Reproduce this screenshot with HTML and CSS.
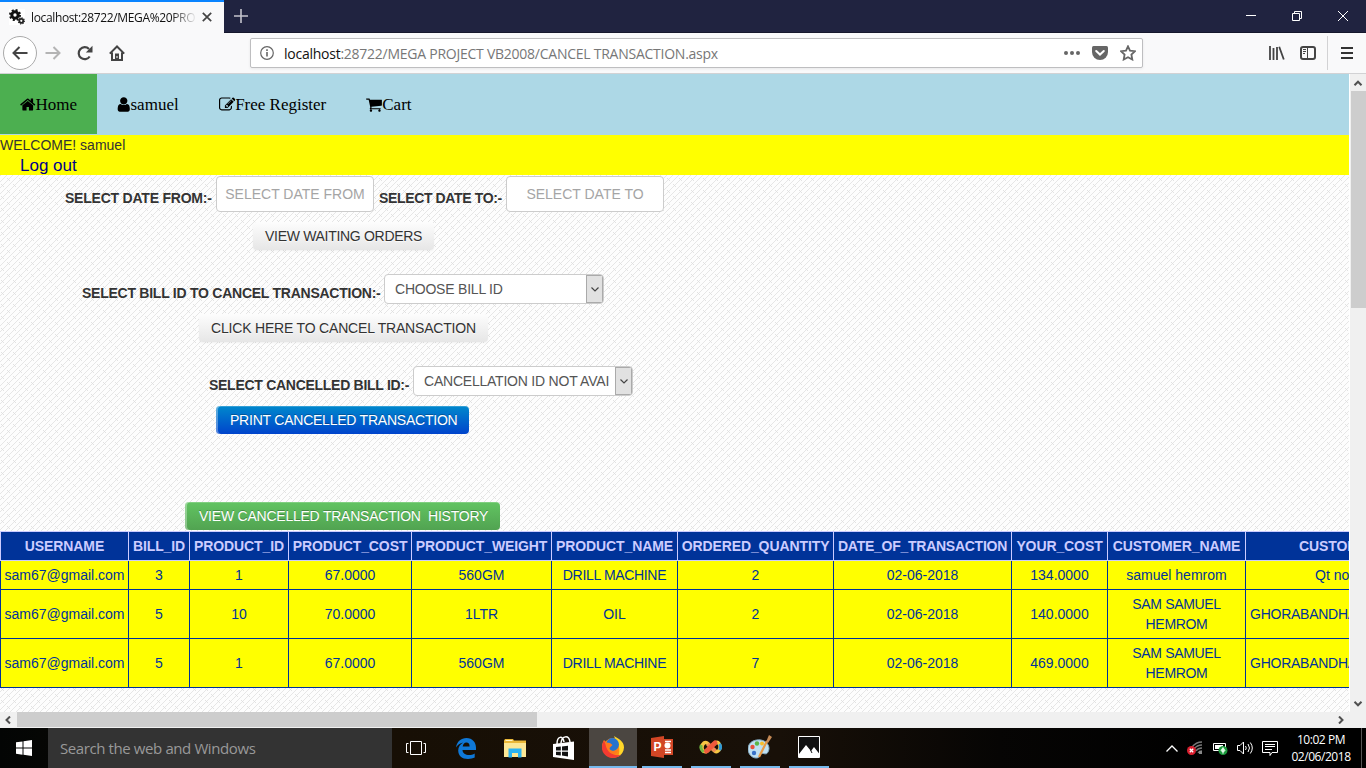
FILE: index.html
```html
<!DOCTYPE html>
<html lang="en">
<head>
<meta charset="utf-8">
<title>Cancel Transaction</title>
<link rel="stylesheet" href="styles.css">
</head>
<body>
<header class="tabbar">
  <div class="tab">
    <svg class="favicon" width="16" height="16" viewBox="0 0 16 16"><rect width="16" height="16" fill="#fff"/><circle cx="6" cy="6" r="3.2" fill="none" stroke="#111" stroke-width="3"/><circle cx="6" cy="6" r="5" fill="none" stroke="#111" stroke-width="2" stroke-dasharray="2 1.93"/><circle cx="12.3" cy="11.8" r="2" fill="none" stroke="#222" stroke-width="1.8"/><circle cx="12.3" cy="11.8" r="3.1" fill="none" stroke="#222" stroke-width="1.1" stroke-dasharray="1.2 1.2"/></svg>
    <span class="tab-title">localhost:28722/MEGA%20PRO</span>
    <svg width="10" height="10" viewBox="0 0 10 10"><path d="M.8.8l8.4 8.4M9.2.8L.8 9.2" stroke="#444" stroke-width="1.7"/></svg>
  </div>
  <svg class="plus" width="14" height="14" viewBox="0 0 14 14"><path d="M7 0v14M0 7h14" stroke="#c4c4cc" stroke-width="1.6"/></svg>
  <div class="window-controls">
    <svg width="10" height="10" viewBox="0 0 10 10"><path d="M0 4.5h10" stroke="#fff"/></svg>
    <svg width="10" height="10" viewBox="0 0 10 10"><path d="M.5 2.5h7v7h-7zM2.5 2.500V.5h7v7H7.500" fill="none" stroke="#fff"/></svg>
    <svg width="10" height="10" viewBox="0 0 10 10"><path d="M0 0l10 10M10 0L0 10" stroke="#fff"/></svg>
  </div>
</header>
<div class="toolbar">
  <div class="back"><svg width="16" height="14" viewBox="0 0 16 14"><path d="M15.500 7H2M7.500 1L1.500 7l6 6" fill="none" stroke="#444" stroke-width="2"/></svg></div>
  <svg class="forward" width="16" height="14" viewBox="0 0 16 14"><path d="M.5 7H14M8.500 1l6 6-6 6" fill="none" stroke="#b4b4b4" stroke-width="2"/></svg>
  <svg class="reload" width="16" height="16" viewBox="0 0 16 16"><path d="M12.700 11.500A6 6 0 1 1 12 4" fill="none" stroke="#444" stroke-width="2.200"/><path d="M15.500.8v6.700H8.800z" fill="#444"/></svg>
  <svg class="home" width="16" height="16" viewBox="0 0 16 16"><path d="M.8 8.600L8 1.500l7.200 7.100M3 7.500v7.500h10V7.500" fill="none" stroke="#444" stroke-width="2"/><path d="M6 8.500h4V15H6z" fill="#444"/><path d="M8 11v2" stroke="#fff"/></svg>
  <div class="address">
    <svg class="info" width="14" height="14" viewBox="0 0 14 14"><circle cx="7" cy="7" r="6.300" fill="none" stroke="#666" stroke-width="1.200"/><path d="M7 6v4.500M7 3.200V5" stroke="#666" stroke-width="1.600"/></svg>
    <span class="url"><b>localhost</b>:28722/MEGA PROJECT VB2008/CANCEL TRANSACTION.aspx</span>
    <svg class="dots" width="16" height="4" viewBox="0 0 16 4"><g fill="#666"><circle cx="2" cy="2" r="2"/><circle cx="8" cy="2" r="2"/><circle cx="14" cy="2" r="2"/></g></svg>
    <svg class="pocket" width="16" height="14" viewBox="0 0 16 14"><path d="M1.500 0h13Q16 0 16 1.500V6A8 8 0 0 1 0 6V1.500Q0 0 1.500 0z" fill="#666"/><path d="M4.200 5L8 8.600 11.800 5" fill="none" stroke="#fff" stroke-width="2" stroke-linecap="round"/></svg>
    <svg class="star" width="16" height="16" viewBox="0 0 16 16"><path d="M8 1.300l2 4.300 5 .6-3.600 3.300.9 5L8 12.200l-4.300 2.300.9-5L1 6.200l5-.6z" fill="none" stroke="#666" stroke-width="1.800"/></svg>
  </div>
  <svg class="library" width="16" height="14" viewBox="0 0 16 14"><path d="M1 0v14M4.500 2v12M8 1v13M10.200.8l4.600 12.700" fill="none" stroke="#444" stroke-width="1.800"/></svg>
  <svg class="sidebar" width="16" height="14" viewBox="0 0 16 14"><rect x="1" y="1" width="14" height="12" rx="2" fill="none" stroke="#444" stroke-width="2"/><path d="M7.500 1v12M3 3.500h3M3 5.500h3M3 7.500h2" stroke="#444"/></svg>
  <div class="menu"><svg width="12" height="12" viewBox="0 0 12 12"><path d="M0 1h12M0 6h12M0 11h12" stroke="#333" stroke-width="2"/></svg></div>
</div>
<div class="viewport">
<main class="page">
  <nav class="nav">
    <a class="active"><svg class="fa" viewBox="0 0 1664 1792"><path transform="translate(-64)" d="M1472 992v480q0 26-19 45t-45 19h-384v-384h-256v384h-384q-26 0-45-19t-19-45v-480q0-1 .5-3t.5-3l575-474 575 474q1 2 1 6zm223-69l-62 74q-8 9-21 11h-3q-13 0-21-7l-692-577-692 577q-12 8-24 7-13-2-21-11l-62-74q-8-10-7-23.500t11-21.500l719-599q32-26 76-26t76 26l244 204v-195q0-14 9-23t23-9h192q14 0 23 9t9 23v408l219 182q10 8 11 21.500t-7 23.500z"/></svg>Home</a>
    <a><svg class="fa fa-user" viewBox="0 0 1280 1792"><path transform="translate(-256)" d="M1536 1399q0 109-62.500 187t-150.500 78h-854q-88 0-150.500-78t-62.500-187q0-85 8.500-160.500t31.500-152 58.500-131 94-89 134.500-34.500q131 128 313 128t313-128q76 0 134.500 34.500t94 89 58.500 131 31.500 152 8.500 160.500zm-256-887q0 159-112.500 271.500t-271.500 112.500-271.500-112.500-112.500-271.500 112.500-271.500 271.500-112.500 271.500 112.500 112.500 271.500z"/></svg>samuel</a>
    <a><svg class="fa fa-edit" viewBox="0 0 1792 1792"><path d="M888 1184l116-116-152-152-116 116v56h96v96h56zm440-720q-16-16-33 1l-350 350q-17 17-1 33t33-1l350-350q17-17 1-33zm80 594v190q0 119-84.500 203.500t-203.500 84.500h-832q-119 0-203.500-84.500t-84.500-203.500v-832q0-119 84.500-203.500t203.500-84.500h832q63 0 117 25 15 7 18 23 3 17-9 29l-49 49q-14 14-32 8-23-6-45-6h-832q-66 0-113 47t-47 113v832q0 66 47 113t113 47h832q66 0 113-47t47-113v-126q0-13 9-22l64-64q15-15 35-7t20 29zm-96-738l288 288-672 672h-288v-288zm444 132l-92 92-288-288 92-92q28-28 68-28t68 28l152 152q28 28 28 68t-28 68z"/></svg>Free Register</a>
    <a><svg class="fa" viewBox="0 0 1664 1792"><path transform="translate(-64)" d="M704 1536q0 52-38 90t-90 38-90-38-38-90 38-90 90-38 90 38 38 90zm896 0q0 52-38 90t-90 38-90-38-38-90 38-90 90-38 90 38 38 90zm128-1088v512q0 24-16.500 42.500t-40.500 21.500l-1044 122q13 60 13 70 0 16-24 64h920q26 0 45 19t19 45-19 45-45 19h-1024q-26 0-45-19t-19-45q0-11 8-31.500t16-36 21.500-40 15.500-29.500l-177-823h-204q-26 0-45-19t-19-45 19-45 45-19h256q16 0 28.500 6.500t19.500 15.500 13 24.500 8 26 5.500 29.500 4.500 26h1201q26 0 45 19t19 45z"/></svg>Cart</a>
  </nav>
  <div class="welcome"><div>WELCOME! samuel</div><a class="logout">Log out</a></div>
  <div class="row dates"><label class="l1">SELECT DATE FROM:-</label><input class="field" placeholder="SELECT DATE FROM"><label class="l2">SELECT DATE TO:-</label><input class="field" placeholder="SELECT DATE TO"></div>
  <div class="row r-wait"><button class="btn">VIEW WAITING ORDERS</button></div>
  <div class="row r-bill"><label>SELECT BILL ID TO CANCEL TRANSACTION:-</label><div class="select"><span>CHOOSE BILL ID</span><i><svg width="8" height="5" viewBox="0 0 8 5"><path d="M.5.5L4 4 7.500.5" fill="none" stroke="#444" stroke-width="1.200"/></svg></i></div></div>
  <div class="row r-cancel"><button class="btn">CLICK HERE TO CANCEL TRANSACTION</button></div>
  <div class="row r-cancelled"><label>SELECT CANCELLED BILL ID:-</label><div class="select"><span>CANCELLATION ID NOT AVAI</span><i><svg width="8" height="5" viewBox="0 0 8 5"><path d="M.5.5L4 4 7.500.5" fill="none" stroke="#444" stroke-width="1.200"/></svg></i></div></div>
  <div class="row r-print"><button class="btn primary">PRINT CANCELLED TRANSACTION</button></div>
  <div class="row r-history"><button class="btn success">VIEW CANCELLED TRANSACTION&nbsp; HISTORY</button></div>
  <table class="orders">
    <colgroup><col class="c128"><col class="c61"><col class="c99"><col class="c123"><col class="c140"><col class="c126"><col class="c156"><col class="c178"><col class="c96"><col class="c138"><col class="c270"></colgroup>
    <thead><tr><th>USERNAME</th><th>BILL_ID</th><th>PRODUCT_ID</th><th>PRODUCT_COST</th><th>PRODUCT_WEIGHT</th><th>PRODUCT_NAME</th><th>ORDERED_QUANTITY</th><th class="tight">DATE_OF_TRANSACTION</th><th>YOUR_COST</th><th>CUSTOMER_NAME</th><th class="address-head">CUSTOMER_ADDRESS</th></tr></thead>
    <tbody>
    <tr class="short"><td>sam67@gmail.com</td><td>3</td><td>1</td><td>67.0000</td><td>560GM</td><td class="caps">DRILL MACHINE</td><td>2</td><td>02-06-2018</td><td>134.0000</td><td>samuel hemrom</td><td class="qt">Qt no</td></tr>
    <tr><td>sam67@gmail.com</td><td>5</td><td>10</td><td>70.0000</td><td>1LTR</td><td>OIL</td><td>2</td><td>02-06-2018</td><td>140.0000</td><td class="caps">SAM SAMUEL HEMROM</td><td class="left">GHORABANDHA</td></tr>
    <tr><td>sam67@gmail.com</td><td>5</td><td>1</td><td>67.0000</td><td>560GM</td><td class="caps">DRILL MACHINE</td><td>7</td><td>02-06-2018</td><td>469.0000</td><td class="caps">SAM SAMUEL HEMROM</td><td class="left">GHORABANDHA</td></tr>
    </tbody>
  </table>
</main>
<div class="vscroll"><svg width="10" height="6" viewBox="0 0 10 6"><path d="M1.500 5.200L5 1.700l3.500 3.500" fill="none" stroke="#505050" stroke-width="2"/></svg><div class="vthumb"></div><svg class="down" width="10" height="6" viewBox="0 0 10 6"><path d="M1.500.8L5 4.300 8.500.8" fill="none" stroke="#505050" stroke-width="2"/></svg></div>
</div>
<div class="hscroll"><svg width="6" height="8" viewBox="0 0 6 8"><path d="M5 .5L1.500 4 5 7.500" fill="none" stroke="#505050" stroke-width="2"/></svg><div class="hthumb"></div><svg class="right" width="6" height="8" viewBox="0 0 6 8"><path d="M1 .5L4.500 4 1 7.500" fill="none" stroke="#505050" stroke-width="2"/></svg></div>
<footer class="taskbar">
  <div class="start"><svg width="16" height="16" viewBox="0 0 16 16"><path d="M0 2.300L6.500 1.400V7.500H0zM7.500 1.200L16 0v7.500H7.500zM0 8.500h6.500v6.200L0 13.800zM7.500 8.500H16V16l-8.500-1.200z" fill="#fff"/></svg></div>
  <div class="search">Search the web and Windows</div>
  <div class="app view"><svg width="20" height="14" viewBox="0 0 20 14"><path d="M4.500.5h11v13h-11zM2.500 2.500h-2v9h2M17.500 2.500h2v9h-2" fill="none" stroke="#fff"/></svg></div>
  <div class="app"><svg width="20" height="21" viewBox="0 0 20 21"><path d="M0 9.500C1 3.500 5 0 10.500 0 16.500 0 20 4.500 20 9.800V12H6.500c.2 3.200 3 5 6.500 5 2 0 4-.6 5.700-1.600v4.200C17 20.500 14.700 21 12 21 6 21 2.200 17.500 2.200 12.500c0-3.500 2-6.500 5-8C4 5 1.500 7 0 9.500zM6.700 8.500h6.900c0-2.500-1-4-3.200-4S7 6.200 6.700 8.500z" fill="#0f78d7"/></svg></div>
  <div class="app"><svg width="22" height="19" viewBox="0 0 22 19"><path d="M0 1.500L1 0h8l1 1.500h12V18H0z" fill="#eab839"/><path d="M0 4h22v14H0z" fill="#fce795"/><path d="M1.500 1.500h7" stroke="#fff5c8"/><path d="M4.500 18.500V9.500h13v9h-3.500V14H8v4.500z" fill="#2bb3f3"/></svg></div>
  <div class="app"><svg width="22" height="24" viewBox="0 0 22 24"><path d="M0 8l21-2.500V24L0 21z" fill="#fff"/><path d="M4 8C4 0 10-1 11 6M8 7C9-1 16-1 17 6" fill="none" stroke="#fff" stroke-width="1.500"/><path d="M3 11l4.800-.5v4H3zM9 10.400l6-.6v4.700H9zM3 15.700h4.800v3.800L3 19zM9 15.700h6v4.700l-6-.8z" fill="#111"/></svg></div>
  <div class="app focus"><svg width="22" height="22" viewBox="0 0 22 22"><circle cx="11" cy="12" r="10" fill="#ff8a14"/><path d="M12 0c4 2.500 10 5 10 11.500-.2 4-2.500 7.500-6 9.300C18 17 18 9 14 5z" fill="#ffd729"/><circle cx="10.500" cy="8.500" r="6.500" fill="#2673cf"/><path d="M2 4l2.500 2.500L8 7l2.500 2L7.500 12c0 3 5.500 4 8.500 1.500-1 5-6 6.500-10 5C2 17 0 14 0 11c0-3 .8-5 2-7z" fill="#ff7a1c"/><path d="M0 12c0 5.500 5 10 11 10 3.500 0 6-1.500 8-3.500-5 2-14-.5-15.500-10L2 4.500C.8 6.500 0 9 0 12z" fill="#f33b31"/></svg></div>
  <div class="app open"><svg width="22" height="22" viewBox="0 0 22 22"><path d="M12 3h10v16H12z" fill="#d44827"/><path d="M14 5.500h6M14 14h6M14 16.500h6" stroke="#fff" stroke-width="1.500"/><circle cx="16.500" cy="9.500" r="3" fill="#fff"/><path d="M0 2l13-2v22L0 20z" fill="#d24625"/><text class="ppt" x="2.500" y="15">P</text></svg></div>
  <div class="app open"><svg width="24" height="16" viewBox="0 0 24 16"><path d="M12 8C9 4 7 2.500 5 4S2 10 4.500 12 9 12 12 8s6-6 8-3.500 1 7-1.500 8S14 11 12 8" fill="none" stroke="#f6c643" stroke-width="3.500"/><path d="M4.500 13C2 11 1.500 8 2.500 6" fill="none" stroke="#74b943" stroke-width="3"/><path d="M20.500 5c1.500 2 1 4.500 0 6" fill="none" stroke="#2f9ad7" stroke-width="3"/><path d="M8.500 5l8 7" stroke="#ef8a54" stroke-width="4"/><path d="M7.500 12L16 4" stroke="#ee5a3c" stroke-width="5" stroke-linecap="round"/></svg></div>
  <div class="app open"><svg width="24" height="24" viewBox="0 0 24 24"><path d="M0 14C0 7 7 4 13 5s10 7 7 12c-2 4-5 0-7 2s-1 4-5 4-8-4-8-9z" fill="#bfe0f2" stroke="#82a9bf"/><circle cx="4.500" cy="12" r="2.200" fill="#e7503c"/><circle cx="9" cy="8.500" r="2.200" fill="#59b647"/><circle cx="14" cy="8.500" r="2" fill="#f7bd2b"/><circle cx="6" cy="18" r="2.200" fill="#3872c9"/><path d="M11 22l8-16" stroke="#e79a45" stroke-width="2.200"/><path d="M18 7l3-7 3 2-4 6z" fill="#c58a55"/></svg></div>
  <div class="app open"><svg width="22" height="22" viewBox="0 0 22 22"><path d="M.5.5h21v21H.500z" fill="#111" stroke="#fff"/><path d="M1 18l7-9 5 6 3-4 5.500 7v3H1z" fill="#fff"/><path d="M12.500 14l1.500 3" stroke="#111"/></svg></div>
  <div class="tray">
    <svg width="12" height="7" viewBox="0 0 12 7"><path d="M.5 6.500L6 1l5.500 5.500" fill="none" stroke="#fff" stroke-width="1.300"/></svg>
    <svg width="16" height="14" viewBox="0 0 16 14"><path d="M5 6Q9 1 15 1M7 8Q10 4 15 4M9 10q2-3 6-3M11 12q1-2 4-2" fill="none" stroke="#777" stroke-width="1.300"/><rect x="12" y="10" width="3" height="3" fill="#888"/><circle cx="4.500" cy="9.500" r="4.500" fill="#d91e2e"/><path d="M2.800 7.800l3.400 3.400M6.200 7.800l-3.400 3.400" stroke="#fff" stroke-width="1.300"/></svg>
    <svg width="16" height="13" viewBox="0 0 16 13"><path d="M1.500 1.500h12v7h-12z" fill="none" stroke="#fff"/><path d="M3 3h8v4H3z" fill="#fff"/><circle cx="11" cy="8.500" r="4.500" fill="#1b9a3c"/><path d="M11 5.500l2 3-2 2-2-2zM11 9v3" fill="#d9ffe0" stroke="#fff" stroke-width=".7"/></svg>
    <svg width="16" height="14" viewBox="0 0 16 14"><path d="M.5 4.500h2.500L6.500 1v12L3 9.500H.5zM8.500 5q1.500 2 0 4M11 3q3 4 0 8M13.300 1.500q4 5.500 0 11" fill="none" stroke="#fff"/></svg>
    <svg width="16" height="15" viewBox="0 0 16 15"><path d="M.5.5h15v11H10l-2 3v-3H.5zM3 3.500h10M3 5.500h10M3 8.500h7" fill="none" stroke="#fff"/></svg>
    <div class="clock"><span>10:02 PM</span><span>02/06/2018</span></div>
  </div>
</footer>
</body>
</html>
```
FILE: styles.css
```css
* { box-sizing: border-box; }
body { margin: 0; width: 1366px; height: 768px; overflow: hidden; display: flex; flex-direction: column; font: 14px/20px "Liberation Sans", Arial, sans-serif; color: #333; }
svg { display: block; flex: none; }
.tabbar { height: 33px; background: #202340; display: flex; align-items: center; border-bottom: 1px solid #15172c; flex: none; }
.tab { width: 224px; height: 33px; align-self: flex-start; flex: none; background: #f9f9fa; border-top: 2px solid #0a84ff; padding-left: 9px; display: flex; align-items: center; }
.tab-title { margin-left: 6px; width: 166px; margin-right: 5px; overflow: hidden; white-space: nowrap; font: 12px/18px "Open Sans", sans-serif; letter-spacing: -.36px; color: #111; mask-image: linear-gradient(90deg, #000 140px, transparent 166px); }
.tab > svg { margin-top: -2px; }
.plus { margin-left: 10px; }
.window-controls { margin-left: auto; margin-right: 18px; display: flex; gap: 36px; }
.toolbar { height: 41px; background: #f9f9fa; border-bottom: 1px solid #d2d2d4; display: flex; align-items: center; flex: none; }
.back { width: 34px; height: 34px; margin-left: 3px; border: 1px solid #aaa; border-radius: 50%; background: #fff; display: flex; align-items: center; justify-content: center; }
.forward { margin-left: 8px; }
.reload { margin-left: 16px; }
.home { margin-left: 16px; }
.address { width: 893px; height: 30px; margin-left: 125px; background: #fff; border: 1px solid #bebec0; border-radius: 2px; display: flex; align-items: center; padding: 0 6px 0 9px; box-shadow: 0 1px 3px #0001; }
.url { font: 14px/20px "Open Sans", sans-serif; letter-spacing: -.25px; margin-left: 10px; padding-top: 2px; color: #777; white-space: nowrap; }
.url b { color: #111; font-weight: 400; }
.dots { margin-left: auto; }
.pocket { margin-left: 12px; }
.star { margin-left: 12px; }
.library { margin-left: 126px; }
.sidebar { margin-left: 15px; }
.menu { margin-left: 11px; height: 34px; border-left: 1px solid #d2d2d4; padding-left: 13px; display: flex; align-items: center; }
.viewport { height: 638px; flex: none; display: flex; }
.page { width: 1349px; flex: none; overflow: hidden; background: #fdfdfd url("data:image/svg+xml,%3Csvg xmlns='http://www.w3.org/2000/svg' width='12' height='12'%3E%3Cg fill='none' stroke='%23dfdfdf'%3E%3Cpath d='M-1 7L7-1M-1 13L13-1M5 13l8-8' stroke-width='.8'/%3E%3Cpath d='M1 2l3 3M7 8l3 3' stroke-width='.9'/%3E%3C/g%3E%3C/svg%3E"); }
.nav { height: 61px; background: #add8e6; display: flex; font: 17px/24px "Liberation Serif", serif; color: #000; }
.nav a { height: 60px; padding: 2px 20px 0; display: flex; align-items: center; }
.nav .active { width: 97px; padding-right: 0; background: #4caf50; }
.fa { width: 16px; height: 17px; margin-bottom: 2px; fill: #000; }
.active .fa { width: 15.5px; }
.fa-user { width: 13.5px; }
.fa-edit { width: 16.500px; }
.welcome { height: 40px; background: #ff0; }
.logout { display: block; margin-left: 20px; padding-top: 1px; font-size: 17px; color: #00008b; }
.row { display: flex; }
.row label { font-weight: 700; white-space: nowrap; letter-spacing: -.22px; }
.dates { height: 47px; padding: 1px 0 0 65px; }
.dates label { margin-top: 12px; }
.row .l1 { width: 151px; }
.row .l2 { width: 127px; margin-left: 5px; letter-spacing: -.36px; }
.field { width: 158px; height: 36px; border: 1px solid #ccc; border-radius: 4px; background: #fff; text-align: center; padding: 4px 6px; font: 14px/20px "Liberation Sans", Arial, sans-serif; }
.field::placeholder { color: #a5a5a5; opacity: 1; }
.btn { height: 28px; border: 0; border-radius: 4px; padding: 0 12px; text-align: left; white-space: nowrap; font: 14px/20px "Liberation Sans", Arial, sans-serif; letter-spacing: -.23px; color: #333; background: linear-gradient(#fdfdfd, #e6e6e6); box-shadow: 0 1px 2px #0000000d; text-shadow: 0 1px 1px #ffffffbf; }
.primary { background: linear-gradient(#08c, #04c); color: #fff; box-shadow: inset 2px 0 #ffffff55, inset 0 1px #ffffff33; text-shadow: 0 -1px #00000040; padding-left: 14px; }
.success { background: linear-gradient(#62c462, #51a351); color: #fff; box-shadow: inset 2px 0 #ffffff55, inset 0 1px #ffffff33; text-shadow: 0 -1px #00000040; padding-left: 14px; }
.r-wait { height: 52px; padding-left: 253px; }
.r-wait .btn { width: 181px; letter-spacing: -.3px; }
.r-bill { height: 40px; padding-left: 82px; }
.r-bill label { width: 302px; margin-top: 9px; letter-spacing: -.25px; }
.r-cancel { height: 52px; padding-left: 199px; }
.r-cancel .btn { width: 289px; letter-spacing: -.19px; }
.r-cancelled { height: 40px; padding-left: 209px; }
.r-cancelled label { width: 204px; margin-top: 9px; letter-spacing: -.28px; }
.r-print { height: 96px; padding-left: 216px; }
.r-print .btn { width: 253px; }
.r-history { height: 29px; padding-left: 185px; }
.r-history .btn { width: 315px; }
.select { width: 220px; height: 30px; border: 1px solid #ccc; border-radius: 4px; background: #fff; display: flex; color: #555; overflow: hidden; }
.select span { width: 201px; padding: 4px 0 0 10px; overflow: hidden; white-space: nowrap; letter-spacing: -.22px; }
.select i { width: 17px; background: #e1e1e1; border: 1px solid #aaa; display: flex; align-items: center; justify-content: center; }
.orders { table-layout: fixed; width: 1515px; border-collapse: separate; border-spacing: 0; background: #ff0; color: #039; text-align: center; }
.orders th { height: 30px; padding: 0; background: #039; color: #ccf; border: 1px solid #ccf; border-right: 0; white-space: nowrap; letter-spacing: -.1px; }
.orders .tight { letter-spacing: -.26px; }
.orders td { height: 49px; padding: 4px; border-left: 1px solid #039; border-bottom: 1px solid #039; }
.orders .short td { height: 29px; }
.orders td:first-child { padding: 0; }
.orders .caps { letter-spacing: -.33px; }
.c128 { width: 128px; } .c61 { width: 61px; } .c99 { width: 99px; } .c123 { width: 123px; } .c140 { width: 140px; } .c126 { width: 126px; } .c156 { width: 156px; } .c178 { width: 178px; } .c96 { width: 96px; } .c138 { width: 138px; } .c270 { width: 270px; }
.orders .address-head { text-align: left; padding-left: 53px; }
.orders .qt { text-align: left; padding-left: 69px; }
.orders .left { text-align: left; letter-spacing: -.25px; }
.vscroll { width: 17px; background: #f0f0f0; border-left: 1px solid #fff; display: flex; flex-direction: column; align-items: center; padding: 6px 0 5px; }
.vthumb { width: 15px; height: 217px; margin-top: 5px; background: #cdcdcd; }
.down { margin-top: auto; }
.hscroll { height: 16px; background: #f0f0f0; flex: none; display: flex; align-items: center; padding-left: 5px; }
.hthumb { width: 520px; height: 15px; align-self: flex-start; margin-left: 6px; background: #cdcdcd; }
.right { margin-left: auto; margin-right: 22px; }
.taskbar { height: 40px; flex: none; display: flex; background: linear-gradient(90deg, #030504, #170f05 390px, #181008 780px, #060504 1000px, #000 1200px); }
.start { width: 48px; display: flex; align-items: center; justify-content: center; }
.search { width: 344px; background: #333; color: #999; padding: 10px 12px; margin-right: 0; font: 15px/20px "Open Sans", sans-serif; letter-spacing: -.4px; white-space: nowrap; }
.app { width: 40px; margin-right: 9px; height: 40px; display: flex; align-items: center; justify-content: center; flex: none; }
.view { margin-left: 4px; margin-right: 10px; }
.focus { width: 48px; margin: 0 5px 0 -4px; background: #4b4641; border-bottom: 2px solid #76b9ed; }
.open { border-bottom: 2px solid #76b9ed; }
.ppt { font: 700 12px "Liberation Sans", sans-serif; fill: #fff; }
.tray { margin-left: auto; display: flex; align-items: center; gap: 9px; color: #fff; border-right: 1px solid #555; height: 40px; margin-right: 4px; }
.clock { width: 76px; padding-right: 4px; margin-left: -2px; display: flex; flex-direction: column; align-items: center; font: 12px/17px "Open Sans", sans-serif; letter-spacing: -.45px; }
```
